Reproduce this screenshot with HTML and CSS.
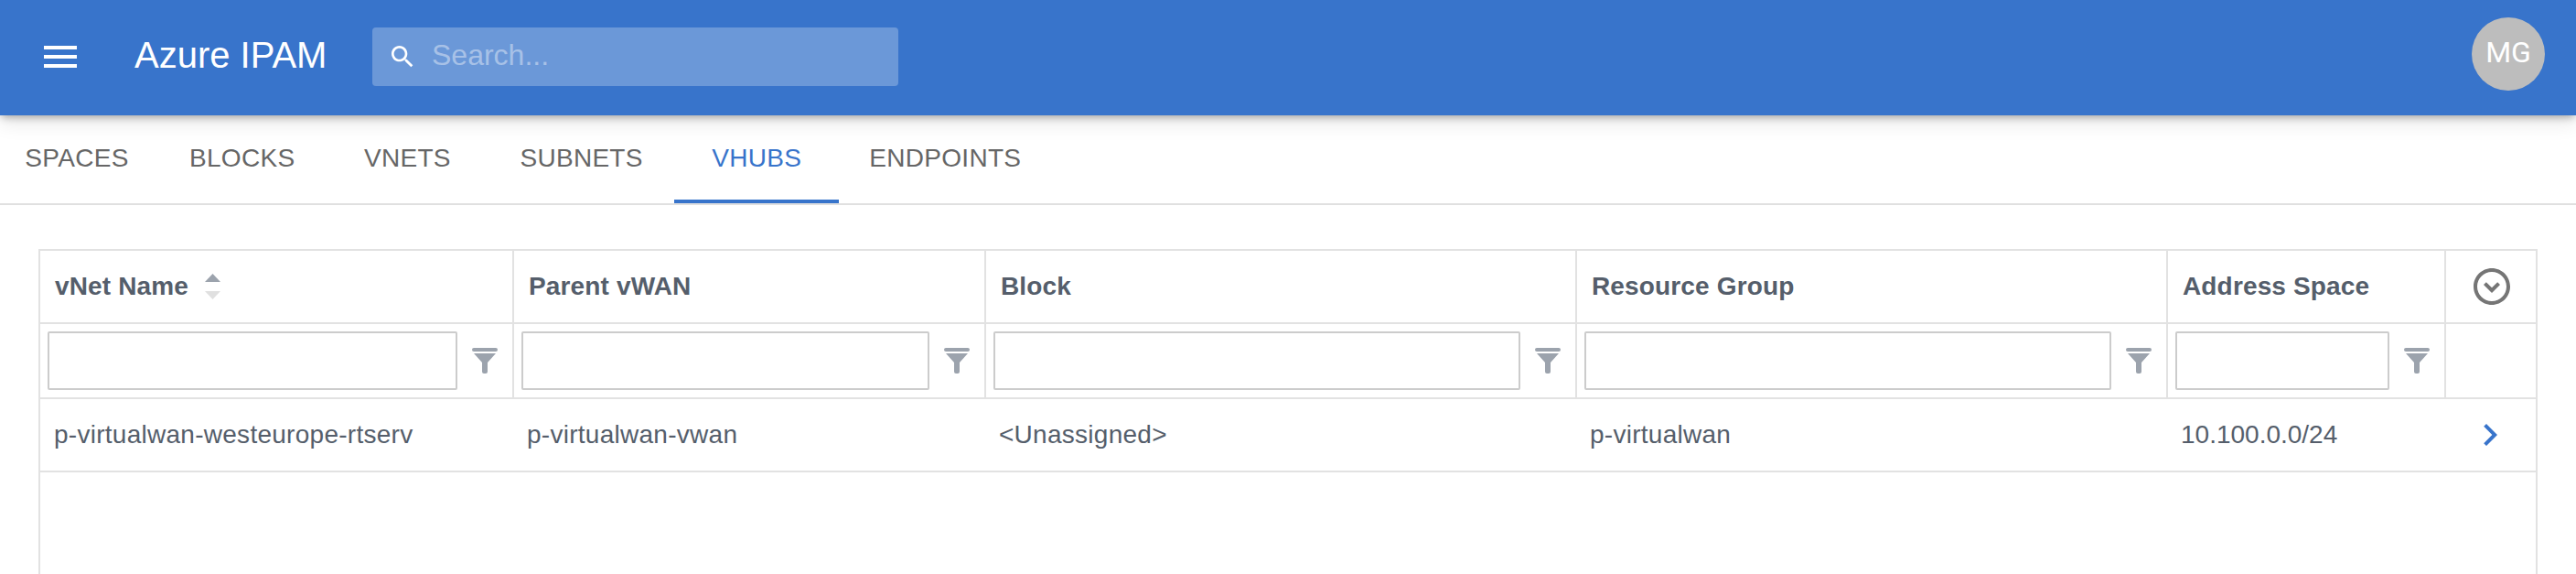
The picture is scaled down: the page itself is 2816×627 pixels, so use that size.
FILE: index.html
```html
<!DOCTYPE html>
<html lang="en">
<head>
<meta charset="utf-8">
<title>Azure IPAM</title>
<link rel="stylesheet" href="styles.css">
</head>
<body>
<div class="page">
  <header class="appbar">
    <svg class="menu-icon" viewBox="0 0 24 24"><path d="M3 18h18v-2H3v2zm0-5h18v-2H3v2zm0-7v2h18V6H3z"/></svg>
    <div class="brand">Azure IPAM</div>
    <div class="search">
      <svg class="search-icon" viewBox="0 0 24 24"><path d="M15.5 14h-.79l-.28-.27C15.41 12.59 16 11.11 16 9.5 16 5.91 13.09 3 9.5 3S3 5.91 3 9.5 5.91 16 9.5 16c1.61 0 3.09-.59 4.23-1.57l.27.28v.79l5 4.99L20.49 19l-4.99-5zm-6 0C7.01 14 5 11.99 5 9.5S7.01 5 9.5 5 14 7.01 14 9.5 11.99 14 9.5 14z"/></svg>
      <span class="search-placeholder">Search...</span>
    </div>
    <div class="avatar">MG</div>
  </header>
  <nav class="tabs">
    <div class="tab">SPACES</div>
    <div class="tab">BLOCKS</div>
    <div class="tab">VNETS</div>
    <div class="tab">SUBNETS</div>
    <div class="tab tab-active">VHUBS</div>
    <div class="tab">ENDPOINTS</div>
  </nav>
  <main class="content">
    <div class="grid">
      <div class="row head-row">
        <div class="cell col-a">vNet Name
          <svg class="sort" viewBox="0 0 17 28"><path class="sort-up" d="M8.5 0 17 9H0z"/><path class="sort-down" d="M0 19h17l-8.5 9z"/></svg>
        </div>
        <div class="cell col-b">Parent vWAN</div>
        <div class="cell col-c">Block</div>
        <div class="cell col-d">Resource Group</div>
        <div class="cell col-e">Address Space</div>
        <div class="cell col-f head-action">
          <svg class="expand-icon" viewBox="0 0 24 24"><path d="M15.08 9.59 12 12.67 8.92 9.59 7.5 11l4.5 4.5 4.5-4.5-1.42-1.41zM12 2C6.48 2 2 6.48 2 12s4.48 10 10 10 10-4.48 10-10S17.52 2 12 2zm0 18c-4.42 0-8-3.58-8-8s3.58-8 8-8 8 3.58 8 8-3.58 8-8 8z"/></svg>
        </div>
      </div>
      <div class="row filter-row">
        <div class="cell col-a"><input class="filter-input" type="text" aria-label="vNet Name"><svg class="funnel" viewBox="0 0 28 28"><rect width="28" height="4" rx="2"/><path d="M2 6h24l-9 10v10a2 2 0 0 1-2 2h-2a2 2 0 0 1-2-2V16z"/></svg></div>
        <div class="cell col-b"><input class="filter-input" type="text" aria-label="Parent vWAN"><svg class="funnel" viewBox="0 0 28 28"><rect width="28" height="4" rx="2"/><path d="M2 6h24l-9 10v10a2 2 0 0 1-2 2h-2a2 2 0 0 1-2-2V16z"/></svg></div>
        <div class="cell col-c"><input class="filter-input" type="text" aria-label="Block"><svg class="funnel" viewBox="0 0 28 28"><rect width="28" height="4" rx="2"/><path d="M2 6h24l-9 10v10a2 2 0 0 1-2 2h-2a2 2 0 0 1-2-2V16z"/></svg></div>
        <div class="cell col-d"><input class="filter-input" type="text" aria-label="Resource Group"><svg class="funnel" viewBox="0 0 28 28"><rect width="28" height="4" rx="2"/><path d="M2 6h24l-9 10v10a2 2 0 0 1-2 2h-2a2 2 0 0 1-2-2V16z"/></svg></div>
        <div class="cell col-e"><input class="filter-input" type="text" aria-label="Address Space"><svg class="funnel" viewBox="0 0 28 28"><rect width="28" height="4" rx="2"/><path d="M2 6h24l-9 10v10a2 2 0 0 1-2 2h-2a2 2 0 0 1-2-2V16z"/></svg></div>
        <div class="cell col-f"></div>
      </div>
      <div class="row data-row">
        <div class="cell col-a">p-virtualwan-westeurope-rtserv</div>
        <div class="cell col-b">p-virtualwan-vwan</div>
        <div class="cell col-c">&lt;Unassigned&gt;</div>
        <div class="cell col-d">p-virtualwan</div>
        <div class="cell col-e">10.100.0.0/24</div>
        <div class="cell col-f">
          <svg class="row-chevron" viewBox="0 0 24 24"><path d="M10 6 8.59 7.41 13.17 12l-4.58 4.59L10 18l6-6z"/></svg>
        </div>
      </div>
    </div>
  </main>
</div>
</body>
</html>
```
FILE: styles.css
```css
* { box-sizing: border-box; }
html, body { margin: 0; height: 100%; background: #fff; overflow: hidden; }
.page { height: 627px; display: flex; flex-direction: column; }

.appbar {
  height: 126px;
  flex: none;
  display: flex;
  align-items: center;
  background: #3874cb;
  color: #fff;
  padding: 0 34px 0 42px;
  box-shadow: 0 4px 8px -2px rgba(0,0,0,.3), 0 8px 20px rgba(0,0,0,.1);
  position: relative;
  z-index: 1;
}
.menu-icon { width: 48px; height: 48px; fill: #fff; flex: none; margin-bottom: 2px; }
.brand {
  width: 260px;
  font: 400 40px/48px "Liberation Sans", Arial, sans-serif;
  margin-left: 57px;
  margin-bottom: 6px;
  white-space: nowrap;
}
.search {
  width: 575px;
  height: 64px;
  margin-bottom: 2px;
  display: flex;
  align-items: center;
  background: rgba(255,255,255,.26);
  border-radius: 4px;
  padding-left: 17px;
}
.search-icon { width: 32px; height: 32px; fill: #fff; flex: none; }
.search-placeholder {
  font: 400 32px/40px "Liberation Sans", Arial, sans-serif;
  color: rgba(255,255,255,.42);
  margin-left: 16px;
  margin-bottom: 4px;
}
.avatar {
  width: 80px;
  height: 80px;
  margin-left: auto;
  margin-bottom: 8px;
  border-radius: 50%;
  background: #bdbdbd;
  color: #fff;
  font: 400 32px/76px Roboto, sans-serif;
  text-align: center;
}

.tabs {
  height: 98px;
  flex: none;
  display: flex;
  border-bottom: 2px solid #e0e0e0;
  margin-left: -6px;
}
.tab {
  min-width: 180px;
  padding: 2px 33px 0;
  height: 96px;
  display: flex;
  align-items: center;
  justify-content: center;
  font: 400 28px/40px "Liberation Sans", Arial, sans-serif;
  letter-spacing: .3px;
  color: #666;
  border-bottom: 4px solid transparent;
}
.tab-active { color: #3874cb; border-bottom-color: #3874cb; margin-left: 1.5px; }

.content { flex: 1; min-height: 0; padding: 48px 42px 0; overflow: hidden; }
.grid {
  height: 100%;
  border: 2px solid #e2e2e2;
  border-bottom: 0;
  font: 400 28px/40px "Liberation Sans", Arial, sans-serif;
  color: #555e6b;
}
.row { display: flex; border-bottom: 2px solid #e2e2e2; }
.cell { display: flex; align-items: center; flex: none; height: 100%; }
.col-a { width: 518px; }
.col-b { width: 516px; }
.col-c { width: 646px; }
.col-d { width: 646px; }
.col-e { width: 304px; }
.col-f { width: 100px; }

.head-row { height: 80px; font-weight: 700; letter-spacing: .15px; }
.head-row .cell { padding-left: 16px; border-right: 2px solid #e2e2e2; }
.head-row .col-f, .filter-row .col-f { border-right: 0; }
.head-row .head-action { padding-left: 26px; }
.sort { width: 17px; height: 28px; margin-left: 18px; flex: none; }
.sort-up { fill: #9ca3ad; }
.sort-down { fill: #e0e0e0; }
.expand-icon { width: 48px; height: 48px; fill: #757575; flex: none; }

.filter-row { height: 82px; }
.filter-row .cell { padding: 8px 16px 8px 8px; align-items: flex-start; border-right: 2px solid #e2e2e2; }
.filter-row .col-f { padding: 0; }
.filter-input {
  flex: 1;
  min-width: 0;
  height: 64px;
  border: 2px solid #ccc;
  border-radius: 2px;
  background: #fff;
  padding: 0;
  margin: 0;
  outline: 0;
}
.funnel { width: 28px; height: 28px; margin: 18px 0 0 16px; fill: #9ca3ad; flex: none; }

.data-row { height: 80px; letter-spacing: .27px; }
.data-row .cell { padding-left: 14px; }
.data-row .col-a { padding-left: 15px; }
.data-row .col-e { letter-spacing: 0; }
.data-row .col-f { padding-left: 24px; }
.row-chevron { width: 48px; height: 48px; fill: #3874cb; flex: none; }
```
